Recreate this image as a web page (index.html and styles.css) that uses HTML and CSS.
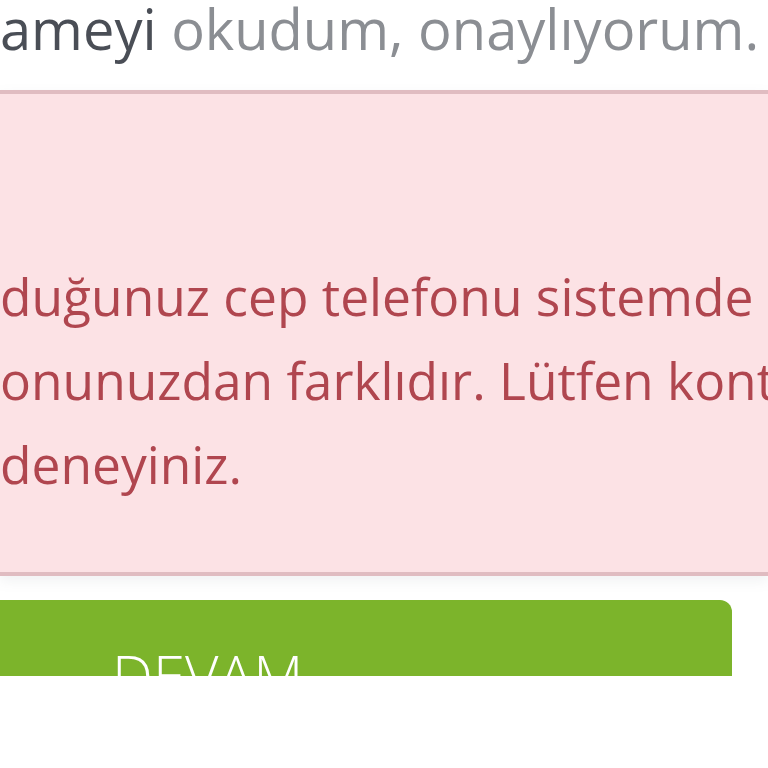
FILE: index.html
```html
<!DOCTYPE html>
<html lang="tr">
<head>
<meta charset="utf-8">
<title>Onay</title>
<link rel="stylesheet" href="styles.css">
</head>
<body>
<div class="page">
  <p class="consent"><span class="consent-strong">ameyi</span> okudum, onaylıyorum.</p>
  <div class="alert">
    <p class="alert-line">duğunuz cep telefonu sistemde</p>
    <p class="alert-line">onunuzdan farklıdır. Lütfen kontrol</p>
    <p class="alert-line">deneyiniz.</p>
  </div>
  <div class="actions">
    <button class="btn" type="button"><span class="btn-label">DEVAM</span></button>
  </div>
</div>
</body>
</html>
```

FILE: styles.css
```css
html, body {
  margin: 0;
  padding: 0;
  background: #ffffff;
}
body {
  width: 768px;
  height: 768px;
  overflow: hidden;
  font-family: "Open Sans", "Noto Sans", "DejaVu Sans", sans-serif;
}
.page {
  display: flex;
  flex-direction: column;
  overflow: hidden;
}
.consent {
  margin: 0 0 34px 0;
  font-size: 56px;
  line-height: 56px;
  color: #8b8e93;
  white-space: nowrap;
}
.consent-strong {
  color: #4a4e56;
}
.alert {
  background: #fce2e5;
  border-top: 4px solid #e0bcc1;
  border-bottom: 4px solid #e0bcc1;
  padding: 160px 0 66px 0;
  box-shadow: 0 5px 12px rgba(120, 130, 140, 0.10);
  overflow: hidden;
}
.alert-line {
  margin: 0;
  font-size: 51.5px;
  line-height: 84px;
  color: #b0464f;
  white-space: nowrap;
}
.actions {
  display: flex;
  margin-top: 24px;
  padding-right: 36px;
}
.btn {
  flex: 1;
  height: 76px;
  margin-left: -20px;
  border: none;
  border-radius: 0 12px 0 0;
  background: #7cb42b;
  padding: 47px 0 0 132px;
  text-align: left;
  overflow: hidden;
  font-family: "Open Sans", "Noto Sans", "DejaVu Sans", sans-serif;
  display: block;
}
.btn-label {
  display: block;
  font-size: 58px;
  line-height: 58px;
  font-weight: 300;
  color: #ffffff;
  white-space: nowrap;
}
```
